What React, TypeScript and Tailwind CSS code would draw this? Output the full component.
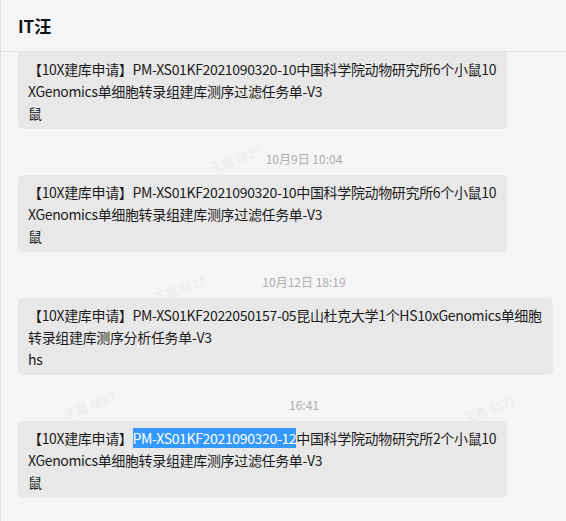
import type { ReactNode } from 'react';

const font = { fontFamily: '"Noto Sans CJK SC", "Liberation Sans", sans-serif' };

function Bubble({ children, flatTop = false }: { children: ReactNode; flatTop?: boolean }) {
  return (
    <div
      className={`relative ml-[17px] w-fit rounded-[5px] bg-[#e8e8e8] pl-[10px] pr-[11px] pt-[6px] pb-[5px] text-[14px] leading-[22px] tracking-[-0.34px] text-[#1b1b1b] whitespace-nowrap ${
        flatTop ? 'rounded-t-none' : ''
      }`}
    >
      {children}
    </div>
  );
}

function Stamp({ children }: { children: ReactNode }) {
  return (
    <div className="relative mt-[22px] mb-[8px] pl-[41px] text-center text-[12px] leading-[16px] text-[#adadad]">
      {children}
    </div>
  );
}

const marks = [
  { x: 420, y: 98 },
  { x: 208, y: 150 },
  { x: 152, y: 280 },
  { x: 62, y: 396 },
  { x: 462, y: 400 },
];

export default function App() {
  return (
    <div
      className="relative h-[521px] w-[566px] overflow-hidden border-l border-[#e3e3e5] bg-[#f5f5f6]"
      style={font}
    >
      {marks.map((m, i) => (
        <span
          key={i}
          className="absolute -rotate-[20deg] text-[12px] whitespace-nowrap text-[#ebebed] select-none"
          style={{ left: m.x, top: m.y }}
        >
          王露 6627
        </span>
      ))}

      <header className="relative flex h-[52px] items-center border-b border-[#e4e4e6] bg-[#f5f5f6] pl-[17px]">
        <h1 className="text-[17px] font-bold text-[#111]">IT汪</h1>
      </header>

      <div className="relative">
        <Bubble flatTop>
          【10X建库申请】PM-XS01KF2021090320-10中国科学院动物研究所6个小鼠10
          <br />
          XGenomics单细胞转录组建库测序过滤任务单-V3
          <br />
          鼠
        </Bubble>

        <Stamp>10月9日 10:04</Stamp>
        <Bubble>
          【10X建库申请】PM-XS01KF2021090320-10中国科学院动物研究所6个小鼠10
          <br />
          XGenomics单细胞转录组建库测序过滤任务单-V3
          <br />
          鼠
        </Bubble>

        <Stamp>10月12日 18:19</Stamp>
        <Bubble>
          【10X建库申请】PM-XS01KF2022050157-05昆山杜克大学1个HS10xGenomics单细胞
          <br />
          转录组建库测序分析任务单-V3
          <br />
          hs
        </Bubble>

        <Stamp>16:41</Stamp>
        <Bubble>
          【10X建库申请】
          <span className="bg-[#3399ff] text-white">PM-XS01KF2021090320-12</span>
          中国科学院动物研究所2个小鼠10
          <br />
          XGenomics单细胞转录组建库测序过滤任务单-V3
          <br />
          鼠
        </Bubble>
      </div>
    </div>
  );
}
